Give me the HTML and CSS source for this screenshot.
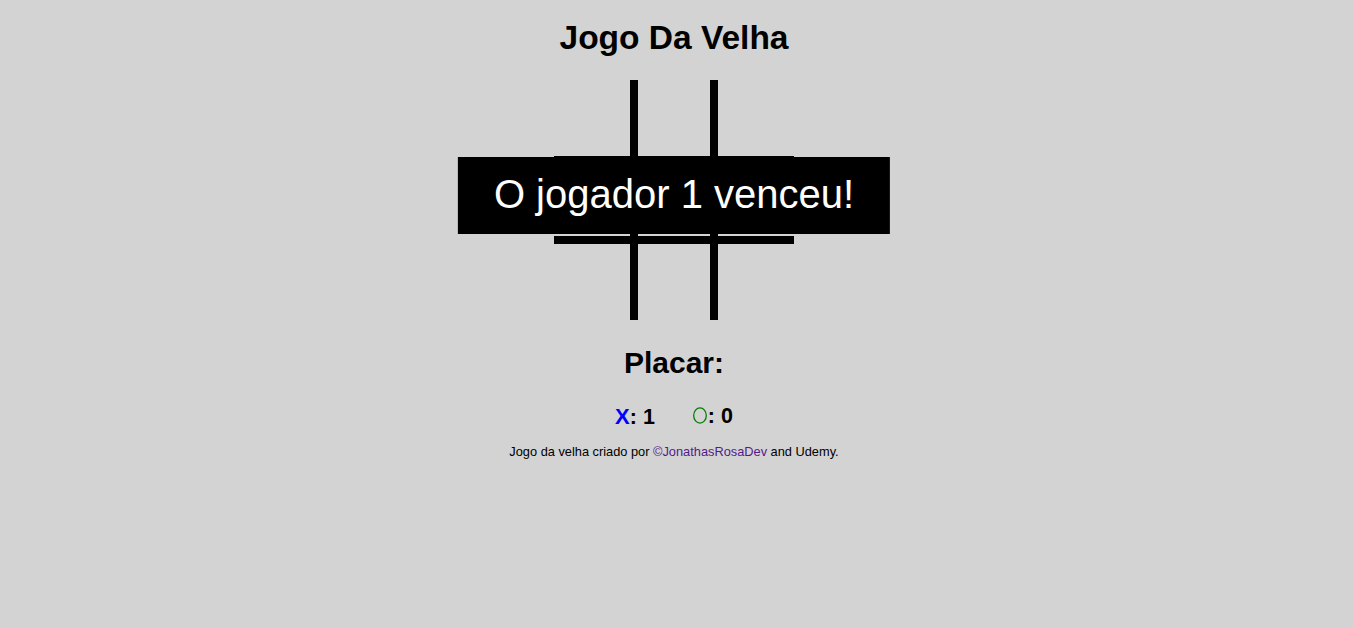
FILE: index.html
```html
<!DOCTYPE html>
<html lang="pt-BR">
<head>
<meta charset="utf-8">
<title>Jogo Da Velha</title>
<link rel="stylesheet" href="styles.css">
</head>
<body>
<main class="page">
  <h1 class="title">Jogo Da Velha</h1>
  <div class="board-wrap">
    <div class="board">
      <div class="cell"></div><div class="cell"></div><div class="cell"></div>
      <div class="cell"></div><div class="cell"></div><div class="cell"></div>
      <div class="cell"></div><div class="cell"></div><div class="cell"></div>
    </div>
    <div class="message">O jogador 1 venceu!</div>
  </div>
  <h2 class="score-title">Placar:</h2>
  <div class="score">
    <span class="score-item"><span class="x-mark">X</span>: 1</span>
    <span class="score-item"><svg class="o-mark" width="14" height="17" viewBox="0 0 14 17"><ellipse cx="7" cy="8.5" rx="6.3" ry="7.6" fill="none" stroke="#008000" stroke-width="1.3"/></svg>: 0</span>
  </div>
  <p class="footer">Jogo da velha criado por <a class="footer-link" href="#">©JonathasRosaDev</a> and Udemy.</p>
</main>
</body>
</html>
```

FILE: styles.css
```css
html, body {
  margin: 0;
  padding: 0;
}

body {
  background: #d3d3d3;
  font-family: Arial, "Liberation Sans", Helvetica, sans-serif;
  color: #000;
  padding-right: 5px;
}

.page {
  display: flex;
  flex-direction: column;
  align-items: center;
}

.title {
  margin: 19px 0 0;
  font-size: 33.5px;
  line-height: 38px;
  font-weight: bold;
}

.board-wrap {
  position: relative;
  margin-top: 23px;
}

.board {
  display: grid;
  grid-template-columns: 76px 72px 76px;
  grid-template-rows: 76px 72px 76px;
  gap: 8px;
  background: #000;
  width: 240px;
}

.cell {
  background: #d3d3d3;
}

.message {
  position: absolute;
  top: 77px;
  left: 50%;
  transform: translateX(-50%);
  background: #000;
  color: #fff;
  font-size: 40px;
  line-height: 46px;
  padding: 14px 36px 17px;
  white-space: nowrap;
}

.score-title {
  margin: 25px 0 0;
  font-size: 30px;
  line-height: 35px;
  font-weight: bold;
}

.score {
  display: flex;
  gap: 38px;
  margin-top: 25px;
  font-size: 21.5px;
  line-height: 23px;
  font-weight: bold;
}

.score-item {
  display: flex;
  align-items: baseline;
}

.x-mark {
  color: #0000ff;
  font-size: 22px;
}

.o-mark {
  align-self: flex-start;
  margin: 2px 1px 0 0;
}

.footer {
  margin: 15px 0 0;
  font-size: 12.8px;
  line-height: 15px;
}

.footer-link {
  color: #551a8b;
  text-decoration: none;
}
```
